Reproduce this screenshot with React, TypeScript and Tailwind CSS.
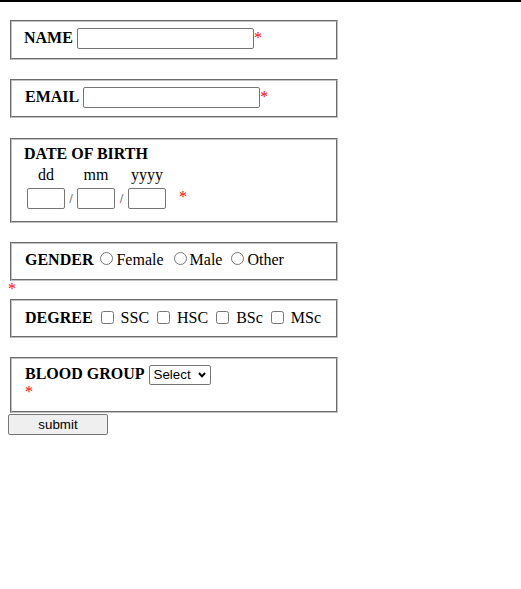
export default function App() {
  const box =
    "ml-[2px] w-[328px] border-2 [border-style:groove] border-[#c0c0c0] bg-white";
  const textInput =
    "h-[21px] rounded-[2px] border border-[#767676] bg-white px-[2px] font-['Liberation_Sans',Arial,sans-serif] text-[13.33px] outline-none";
  const star = "text-[#ff0000]";
  const t = "mb-[2px]";

  return (
    <div className="min-h-[589px] bg-white font-['Liberation_Serif','Times_New_Roman',serif] text-[16px] leading-[18px] text-black">
      <div className="h-[2px] bg-black" />
      <form className="pl-[8px]" onSubmit={(e) => e.preventDefault()}>
        {/* NAME */}
        <div className={`${box} mt-[18px] pt-[6px] pb-[9px] pl-[12px]`}>
          <div className="flex h-[21px] items-center">
            <span className={`${t} font-bold`}>NAME</span>
            <input type="text" className={`${textInput} ml-[4px] w-[177px]`} />
            <span className={`${t} ${star}`}>*</span>
          </div>
        </div>

        {/* EMAIL */}
        <div className={`${box} mt-[19px] pt-[6px] pb-[8px] pl-[13px]`}>
          <div className="flex h-[21px] items-center">
            <span className={`${t} font-bold`}>EMAIL</span>
            <input type="email" className={`${textInput} ml-[4px] w-[177px]`} />
            <span className={`${t} ${star}`}>*</span>
          </div>
        </div>

        {/* DATE OF BIRTH */}
        <div className={`${box} mt-[20px] pt-[5px] pb-[12px] pl-[12px]`}>
          <div className="h-[18px] font-bold">DATE OF BIRTH</div>
          <div className="mt-[3px] flex h-[18px]">
            <span className="ml-[3px] w-[38px] text-center">dd</span>
            <span className="w-[12px]" />
            <span className="w-[38px] text-center">mm</span>
            <span className="w-[13px]" />
            <span className="w-[38px] text-center">yyyy</span>
          </div>
          <div className="mt-[4px] flex h-[21px] items-center">
            <input type="text" className={`${textInput} ml-[3px] w-[38px]`} />
            <span className="w-[12px] text-center font-['Liberation_Sans',Arial,sans-serif] text-[13px] text-[#7a7a8a]">
              /
            </span>
            <input type="text" className={`${textInput} w-[38px]`} />
            <span className="w-[13px] text-center font-['Liberation_Sans',Arial,sans-serif] text-[13px] text-[#7a7a8a]">
              /
            </span>
            <input type="text" className={`${textInput} w-[38px]`} />
            <span className={`${star} ml-[13px] self-start`}>*</span>
          </div>
        </div>

        {/* GENDER */}
        <div className={`${box} mt-[19px] pt-[6px] pb-[8px] pl-[13px]`}>
          <div className="flex h-[21px] items-center">
            <span className={`${t} font-bold`}>GENDER</span>
            <input
              type="radio"
              name="gender"
              className="ml-[7px] mr-[3px] mt-[2px] h-[13px] w-[13px] self-start"
            />
            <span className={t}>Female</span>
            <input
              type="radio"
              name="gender"
              className="ml-[10px] mr-[3px] mt-[2px] h-[13px] w-[13px] self-start"
            />
            <span className={t}>Male</span>
            <input
              type="radio"
              name="gender"
              className="ml-[9px] mr-[3px] mt-[2px] h-[13px] w-[13px] self-start"
            />
            <span className={t}>Other</span>
          </div>
        </div>
        <div className={`${star} h-[18px] leading-[16px]`}>*</div>

        {/* DEGREE */}
        <div className={`${box} pt-[6px] pb-[8px] pl-[13px]`}>
          <div className="flex h-[21px] items-center">
            <span className="font-bold">DEGREE</span>
            <input type="checkbox" className="ml-[8px] mr-[3px] h-[13px] w-[13px]" />
            <span className="ml-[4px]">SSC</span>
            <input type="checkbox" className="ml-[8px] mr-[3px] h-[13px] w-[13px]" />
            <span className="ml-[4px]">HSC</span>
            <input type="checkbox" className="ml-[8px] mr-[3px] h-[13px] w-[13px]" />
            <span className="ml-[4px]">BSc</span>
            <input type="checkbox" className="ml-[8px] mr-[3px] h-[13px] w-[13px]" />
            <span className="ml-[4px]">MSc</span>
          </div>
        </div>

        {/* BLOOD GROUP */}
        <div className={`${box} mt-[19px] pt-[6px] pb-[10px] pl-[13px]`}>
          <div className="flex h-[20px] items-center">
            <span className={`${t} font-bold`}>BLOOD GROUP</span>
            <div className="relative ml-[4px] h-[20px] w-[62px]">
              <select className="h-full w-full appearance-none rounded-[2px] border border-[#767676] bg-white pl-[4px] font-['Liberation_Sans',Arial,sans-serif] text-[13.33px] text-black outline-none">
                <option>Select</option>
                <option>A+</option>
                <option>A-</option>
                <option>B+</option>
                <option>B-</option>
                <option>O+</option>
                <option>O-</option>
                <option>AB+</option>
                <option>AB-</option>
              </select>
              <svg
                className="pointer-events-none absolute right-[5px] top-[7px]"
                width="8"
                height="6"
                viewBox="0 0 8 6"
              >
                <path d="M1 1 L4 4.3 L7 1" fill="none" stroke="#000" strokeWidth="2" />
              </svg>
            </div>
          </div>
          <div className={`${star} h-[16px] leading-[14px]`}>*</div>
        </div>

        <button
          type="submit"
          className="mt-[1px] block h-[21px] w-[100px] rounded-[2px] border border-[#767676] bg-[#efefef] font-['Liberation_Sans',Arial,sans-serif] text-[13.33px] leading-[normal] text-black"
        >
          submit
        </button>
      </form>
    </div>
  );
}
